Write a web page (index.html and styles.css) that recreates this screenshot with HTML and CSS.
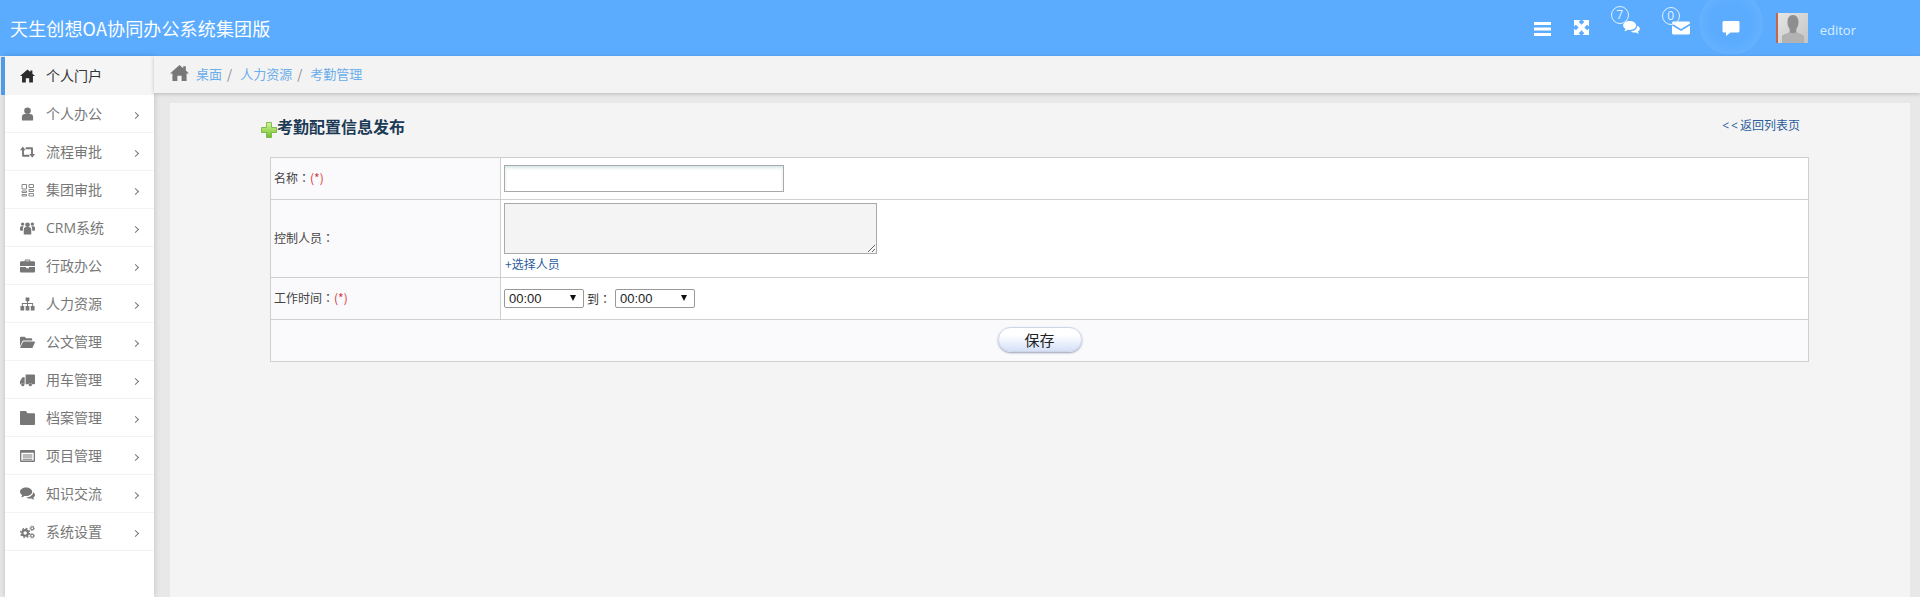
FILE: index.html
```html
<!DOCTYPE html>
<html lang="zh">
<head>
<meta charset="utf-8">
<title>天生创想OA协同办公系统集团版</title>
<link rel="stylesheet" href="styles.css">
</head>
<body>
<header class="topbar">
  <div class="brand">天生创想OA协同办公系统集团版</div>
  <div class="tools">
    <svg class="ti ti-menu" viewBox="0 0 17 14"><path fill="#fff" d="M0 0h17v3H0zM0 5.500h17v3H0zM0 11h17v3H0z"/></svg>
    <svg class="ti ti-expand" viewBox="0 0 16 16"><path fill="#fff" d="M0 0h7L5 2l3 3 3-3-2-2h7v7l-2-2-3 3 3 3 2-2v7H9l2-2-3-3-3 3 2 2H0V9l2 2 3-3-3-3-2 2z"/></svg>
    <div class="ti-badge ti-chat">
      <span class="badge">7</span>
      <svg viewBox="0 0 18 14"><path fill="#fff" d="M7 0c3.900 0 7 2.100 7 4.800S10.900 9.600 7 9.600c-.7 0-1.300-.1-1.900-.2C4 10.300 2.700 10.900 1.200 11c.8-.8 1.300-1.600 1.400-2.600C1 7.500 0 6.200 0 4.800 0 2.100 3.100 0 7 0zM15 5c1.800.7 3 2 3 3.400 0 1.200-.8 2.300-2.100 3 .1.900.5 1.500 1.100 2.200-1.300-.1-2.300-.6-3.200-1.300-.5.100-1 .2-1.600.2-1.700 0-3.200-.6-4.200-1.500 3.900-.1 7.200-2.500 7-6z"/></svg>
    </div>
    <div class="ti-badge ti-mail">
      <span class="badge">0</span>
      <svg viewBox="0 0 18 13"><path fill="#fff" d="M1.500 0h15c.8 0 1.500.7 1.500 1.500v.5L9 7.500 0 2v-.5C0 .7.700 0 1.500 0zM0 4l9 5.500L18 4v7.500c0 .8-.7 1.500-1.500 1.500h-15C.7 13 0 12.300 0 11.500z"/></svg>
    </div>
    <div class="pulse">
      <svg viewBox="0 0 17 15"><path fill="#fff" d="M1.500 0h14c.8 0 1.500.7 1.500 1.500v8.500c0 .8-.7 1.500-1.500 1.500H8L3.500 15v-3.500h-2C.7 11.500 0 10.800 0 10V1.500C0 .7.700 0 1.500 0z"/></svg>
    </div>
    <div class="avatar">
      <svg viewBox="0 0 30 30"><defs><linearGradient id="av" x1="0" y1="0" x2="1" y2="1"><stop offset="0" stop-color="#e6e6e6"/><stop offset="1" stop-color="#c4c4c4"/></linearGradient></defs><rect width="30" height="30" fill="url(#av)"/><path fill="#8e8e8e" d="M15 2c3.600 0 5.500 3 5.500 7 0 3-.8 5.200-2.200 7v3c0 1 5 2.200 6.700 3.500 1 .8 1 2 1 7.500H4c0-5.500 0-6.700 1-7.500C6.700 21.200 11.700 20 11.700 19v-3c-1.400-1.800-2.200-4-2.200-7 0-4 1.900-7 5.500-7z"/><path fill="#b2b2b2" d="M4 30c0-5.500 0-6.700 1-7.500 1.700-1.300 6.700-2.500 6.700-3.500 1 1.500 5.600 1.500 6.600 0 0 1 5 2.200 6.700 3.500 1 .8 1 2 1 7.500z"/></svg>
    </div>
    <span class="user">editor</span>
  </div>
</header>
<div class="main">
  <nav class="side">
    <a class="item active"><svg class="ic" viewBox="0 0 16 14"><path fill="#2b2b2b" d="M8 0l3 2.600V1h2.200v3.500L16 7h-2.200v7H9.800V9.500H6.200V14H2.200V7H0z"/></svg><span>个人门户</span></a>
    <a class="item"><svg class="ic" viewBox="0 0 16 14"><circle cx="8" cy="3.500" r="3.500" fill="#777"/><path fill="#777" d="M3 14c-.8 0-1-.5-1-1.200V10c0-1.800 1.500-3 3-3h6c1.500 0 3 1.200 3 3v2.800c0 .7-.2 1.200-1 1.200z"/></svg><span>个人办公</span><i class="chev"></i></a>
    <a class="item"><svg class="ic" viewBox="0 0 16 14"><path fill="#777" d="M3 1l3 4H4.200v5H10v2H3.200c-.6 0-1-.4-1-1V5H0zM13 13l-3-4h1.800V4H6V2h6.800c.6 0 1 .4 1 1v6H16z"/></svg><span>流程审批</span><i class="chev"></i></a>
    <a class="item"><svg class="ic" viewBox="0 0 15 14"><path fill="none" stroke="#888" d="M2 1.500h4.500v4.500H2zM9 1.500h4.500v3H9zM2 8h4.500v1.500H2zM2 11.500h4.500v1.500H2zM9 6.500h4.500v2H9zM9 10.500h4.500v2.500H9z"/></svg><span>集团审批</span><i class="chev"></i></a>
    <a class="item"><svg class="ic" viewBox="0 0 16 14"><circle cx="8" cy="3.500" r="2.500" fill="#777"/><circle cx="2.800" cy="2.800" r="1.800" fill="#777"/><circle cx="13.200" cy="2.800" r="1.800" fill="#777"/><path fill="#777" d="M4 14V9c0-2 1-3 2.500-3h3C11 6 12 7 12 9v5zM0 9V7c0-1 .6-2 1.500-2H4c-.6.700-1 1.600-1 3v2H.6zM16 9V7c0-1-.6-2-1.500-2H12c.6.700 1 1.600 1 3v2h2.400z"/></svg><span>CRM系统</span><i class="chev"></i></a>
    <a class="item"><svg class="ic" viewBox="0 0 16 14"><path fill="#777" d="M5 2V1c0-.6.400-1 1-1h4c.6 0 1 .4 1 1v1h3.500c.8 0 1.500.7 1.500 1.500V7H0V3.500C0 2.700.7 2 1.500 2zm1 0h4V1H6zM0 8h6.500v1.500h3V8H16v4.500c0 .8-.7 1.500-1.500 1.500h-13C.7 14 0 13.300 0 12.500z"/></svg><span>行政办公</span><i class="chev"></i></a>
    <a class="item"><svg class="ic" viewBox="0 0 16 14"><path fill="#777" d="M6 0h4v4H8.500v2H14v3h1.500v5h-4V9H13V7H8.500v2H10v5H6V9h1.500V7H3v2h1.500v5h-4V9H2V6h5.500V4H6z"/></svg><span>人力资源</span><i class="chev"></i></a>
    <a class="item"><svg class="ic" viewBox="0 0 16 13"><path fill="#777" d="M0 2c0-.6.400-1 1-1h4l1.500 1.500H12c.6 0 1 .4 1 1V5H4C3 5 2.500 5.500 2.200 6.200L0 11zM4 6h11.200c.6 0 .9.500.7 1L13.500 12.300c-.2.400-.5.700-1 .7H.8c-.5 0-.7-.4-.5-.8L3 6.800C3.200 6.300 3.500 6 4 6z"/></svg><span>公文管理</span><i class="chev"></i></a>
    <a class="item"><svg class="ic" viewBox="0 0 16 14"><path fill="#777" d="M6 1h9c.6 0 1 .4 1 1v8.500c0 .6-.4 1-1 1h-2.100a2 2 0 0 0-3.800 0H6zM5 4v7.500H4.900a2 2 0 0 0-3.800 0H0V8.200L2.500 4z"/><circle cx="3" cy="12" r="1.700" fill="#777"/><circle cx="11" cy="12" r="1.700" fill="#777"/></svg><span>用车管理</span><i class="chev"></i></a>
    <a class="item"><svg class="ic" viewBox="0 0 14 13"><path fill="#777" d="M1 0h4.500L7 2h6c.6 0 1 .4 1 1v9c0 .6-.4 1-1 1H1c-.6 0-1-.4-1-1V1c0-.6.400-1 1-1z"/></svg><span>档案管理</span><i class="chev"></i></a>
    <a class="item"><svg class="ic" viewBox="0 0 14 11"><path fill="#777" fill-rule="evenodd" d="M1 0h12c.6 0 1 .4 1 1v9c0 .6-.4 1-1 1H1c-.6 0-1-.4-1-1V1c0-.6.400-1 1-1zM1.200 2.500v7.300h11.600V2.500zM2.500 4h9v1h-9zM2.500 6h9v1h-9zM2.500 8h9v1h-9z"/></svg><span>项目管理</span><i class="chev"></i></a>
    <a class="item"><svg class="ic" viewBox="0 0 16 14"><path fill="#777" d="M6.500 0C10 0 13 2 13 4.600S10 9.200 6.500 9.200c-.6 0-1.200-.1-1.800-.2C3.700 9.900 2.500 10.400 1.100 10.500c.7-.7 1.200-1.500 1.300-2.400C1 7.300 0 6 0 4.600 0 2 3 0 6.500 0zM14 5c1.200.7 2 1.800 2 3 0 1.100-.7 2.100-1.800 2.800.1.900.5 1.600 1.100 2.200-1.300-.1-2.300-.6-3.100-1.300-.5.100-1 .2-1.500.2-1.500 0-2.900-.5-3.800-1.300 3.800-.2 7.200-2.700 7.100-5.600z"/></svg><span>知识交流</span><i class="chev"></i></a>
    <a class="item"><svg class="ic" viewBox="0 0 16 14"><g fill="none" stroke="#777"><circle cx="5.500" cy="8" r="3" stroke-width="2.200"/><circle cx="5.500" cy="8" r="4.700" stroke-width="1.600" stroke-dasharray="1.900 1.790"/><circle cx="13" cy="3" r="1.500" stroke-width="1.100"/><circle cx="13" cy="3" r="2.400" stroke-width=".9" stroke-dasharray="1 .88"/><circle cx="13" cy="11" r="1.500" stroke-width="1.100"/><circle cx="13" cy="11" r="2.400" stroke-width=".9" stroke-dasharray="1 .88"/></g></svg><span>系统设置</span><i class="chev"></i></a>
  </nav>
  <div class="right">
    <div class="crumbs">
      <svg class="home" viewBox="0 0 18 15"><path fill="#777" d="M9 0l3.500 3V1h2.500v4.200L18 8h-2.300v7h-4.700v-5H7v5H2.300V8H0z"/></svg>
      <a>桌面</a><span class="sep">/</span><a>人力资源</a><span class="sep">/</span><a>考勤管理</a>
    </div>
    <div class="content">
      <div class="head">
        <h2 class="title"><svg class="plus" viewBox="0 0 16 16"><defs><linearGradient id="pg" x1="0" y1="0" x2="0" y2="1"><stop offset="0" stop-color="#d6f59a"/><stop offset="1" stop-color="#6fbf2a"/></linearGradient></defs><path fill="url(#pg)" stroke="#6fae3a" stroke-width=".8" d="M5.500.5h5v5h5v5h-5v5h-5v-5h-5v-5h5z"/></svg>考勤配置信息发布</h2>
        <a class="back"><span class="lt">&lt;&lt;</span>返回列表页</a>
      </div>
      <table class="form">
        <tr class="r1"><th>名称<span class="colon" lang="zh-TW">：</span><em>(*)</em></th><td><input class="txt" type="text"></td></tr>
        <tr class="r2"><th>控制人员<span class="colon" lang="zh-TW">：</span></th><td class="top"><textarea class="area"></textarea><a class="pick">+选择人员</a></td></tr>
        <tr class="r3"><th>工作时间<span class="colon" lang="zh-TW">：</span><em>(*)</em></th><td class="times"><span class="selbox"><select class="sel"><option>00:00</option></select></span><span class="to">到<span class="colon" lang="zh-TW">：</span></span><span class="selbox"><select class="sel"><option>00:00</option></select></span></td></tr>
        <tr class="r4"><td colspan="2" class="foot"><button class="save" type="button">保存</button></td></tr>
      </table>
    </div>
  </div>
</div>
</body>
</html>
```
FILE: styles.css
```css
* { box-sizing: border-box; }
html, body { margin: 0; height: 100%; overflow: hidden; }
body { font-family: "Open Sans", "Noto Sans CJK SC", sans-serif; font-size: 13px; background: #e8e8e8; color: #555; }
.topbar { height: 56px; background: #5bacff; display: flex; align-items: center; justify-content: space-between; padding-left: 10px; }
.brand { color: #fff; font-size: 18px; letter-spacing: .15px; font-family: "Noto Sans CJK SC", sans-serif; margin-top: -1px; }
.tools { display: flex; align-items: center; height: 56px; padding-right: 64px; }
.ti-menu { width: 17px; height: 14px; margin-right: 23px; margin-top: 1px; }
.ti-expand { width: 15px; height: 15px; margin-right: 34px; margin-top: -1px; }
.ti-badge { position: relative; width: 18px; height: 14px; }
.ti-badge svg { display: block; width: 18px; height: 14px; }
.ti-chat { width: 17px; margin-right: 32px; }
.ti-chat svg { width: 17px; height: 13px; }
.ti-mail { margin-top: -1px; }
.badge { position: absolute; width: 18px; height: 18px; border: 1px solid #e4f1ff; border-radius: 50%; color: #e4f1ff; font-size: 12px; line-height: 16px; text-align: center; }
.ti-chat .badge { left: -12px; top: -15px; }
.ti-mail .badge { left: -10px; top: -14px; }
.pulse { width: 64px; height: 64px; border-radius: 50%; background: radial-gradient(circle, #5bacff 45%, #68b3ff 80%, #7abdff 100%); display: flex; align-items: center; justify-content: center; margin: -10px 0 0 9px; padding-top: 11px; flex: none; }
.pulse svg { width: 18px; height: 15px; }
.avatar { width: 32px; height: 30px; border-left: 2px solid #c0674c; margin-left: 13px; }
.avatar svg { display: block; width: 30px; height: 30px; }
.user { color: #d9ecff; font-size: 13px; margin-left: 12px; margin-top: 4px; }
.main { display: flex; height: 541px; }
.side { width: 149px; margin-left: 5px; background: #fff; box-shadow: 0 0 6px rgba(0,0,0,.18); position: relative; flex: none; }
.item { display: flex; align-items: center; height: 38px; border-bottom: 1px solid #f3f3f3; color: #777; font-size: 14px; position: relative; padding-left: 15px; }
.item span { margin: -2px 0 0 11px; }
.item .ic { width: 15px; height: 14px; flex: none; }
.active { background: #f5f5f5; color: #333; border-bottom: 0; height: 39px; }
.active::before { content: ""; position: absolute; left: -4px; top: 1px; bottom: 0; width: 4px; background: #4f9be8; }
.chev { position: absolute; left: 128px; top: 18px; width: 5px; height: 5px; border-top: 1px solid #777; border-right: 1px solid #777; transform: rotate(45deg); }
.right { flex: 1; min-width: 0; display: flex; flex-direction: column; }
.crumbs { height: 37px; background: #f3f3f3; box-shadow: 0 1px 4px rgba(0,0,0,.2); display: flex; align-items: center; padding: 0 0 3px 16px; font-family: "Noto Sans CJK SC", sans-serif; position: relative; }
.home { width: 19px; height: 16px; margin-right: 7px; margin-top: -1px; }
.crumbs a { color: #6caeea; font-size: 13px; }
.sep { color: #888; margin: 0 8px 0 5px; font-size: 13px; }
.content { flex: 1; margin: 10px 10px 0 16px; background: #f4f4f4; }
.head { display: flex; justify-content: space-between; align-items: flex-start; padding: 11px 110px 0 91px; height: 54px; }
.title { margin: 0; font-size: 16px; font-weight: 700; color: #1b3a55; font-family: "Noto Sans CJK SC", sans-serif; line-height: 24px; display: flex; align-items: center; }
.plus { width: 16px; height: 16px; margin-top: 7px; }
.back { color: #2a5d9c; font-size: 12px; line-height: 18px; margin-top: 2px; font-family: "Noto Sans CJK SC", sans-serif; }
.lt { letter-spacing: 2px; font-family: "Open Sans", sans-serif; }
.form { margin-left: 100px; width: 1539px; border-collapse: collapse; table-layout: fixed; background: #fff; font-size: 12px; font-family: "Noto Sans CJK SC", sans-serif; }
.form th, .form td { border: 1px solid #cfcfcf; padding: 0 3px; }
.form th { width: 230px; background: #fafafc; font-weight: 400; text-align: left; color: #444; padding-bottom: 2px; }
.form em { color: #d9343a; font-style: normal; }
.colon { font-family: "Noto Sans CJK TC", sans-serif; }
.r1 { height: 42px; } .r2 { height: 78px; } .r3 { height: 42px; } .r4 { height: 42px; }
.form td.top { vertical-align: top; padding-top: 3px; }
.form td.times { padding-bottom: 2px; }
.txt { display: block; width: 280px; height: 27px; border: 1px solid #aaa; background: #fff; box-shadow: inset 0 2px 3px rgba(90,160,160,.25); }
.area { display: block; width: 373px; height: 51px; border: 1px solid #aaa; background: #f4f4f4; margin: 0; resize: both; }
.pick { display: block; color: #2a5d9c; font-size: 12px; margin: 2px 0 0 1px; line-height: 16px; }
.selbox { display: inline-block; position: relative; vertical-align: middle; }
.selbox::after { content: ""; position: absolute; right: 8px; top: 6px; border: 3.5px solid transparent; border-top: 6px solid #111; border-bottom: 0; }
.sel { display: block; appearance: none; -webkit-appearance: none; width: 80px; height: 19px; padding: 0 0 0 4px; font-size: 13px; font-family: "Liberation Sans", sans-serif; background: #fff; color: #222; border: 1px solid #999; border-radius: 2px; }
.to { color: #333; display: inline-block; width: 31px; padding-left: 3px; vertical-align: middle; }
.foot { background: #fafafc; text-align: center; }
.save { width: 84px; height: 25px; margin-top: -2px; border: 1px solid #cfd6e6; border-radius: 13px; background: linear-gradient(#fff 30%, #d5e0f8); box-shadow: 0 1px 2px rgba(60,70,120,.5); font-size: 15px; color: #222; font-family: "Noto Sans CJK SC", sans-serif; padding: 0; line-height: 20px; display: inline-block; vertical-align: middle; }
```
